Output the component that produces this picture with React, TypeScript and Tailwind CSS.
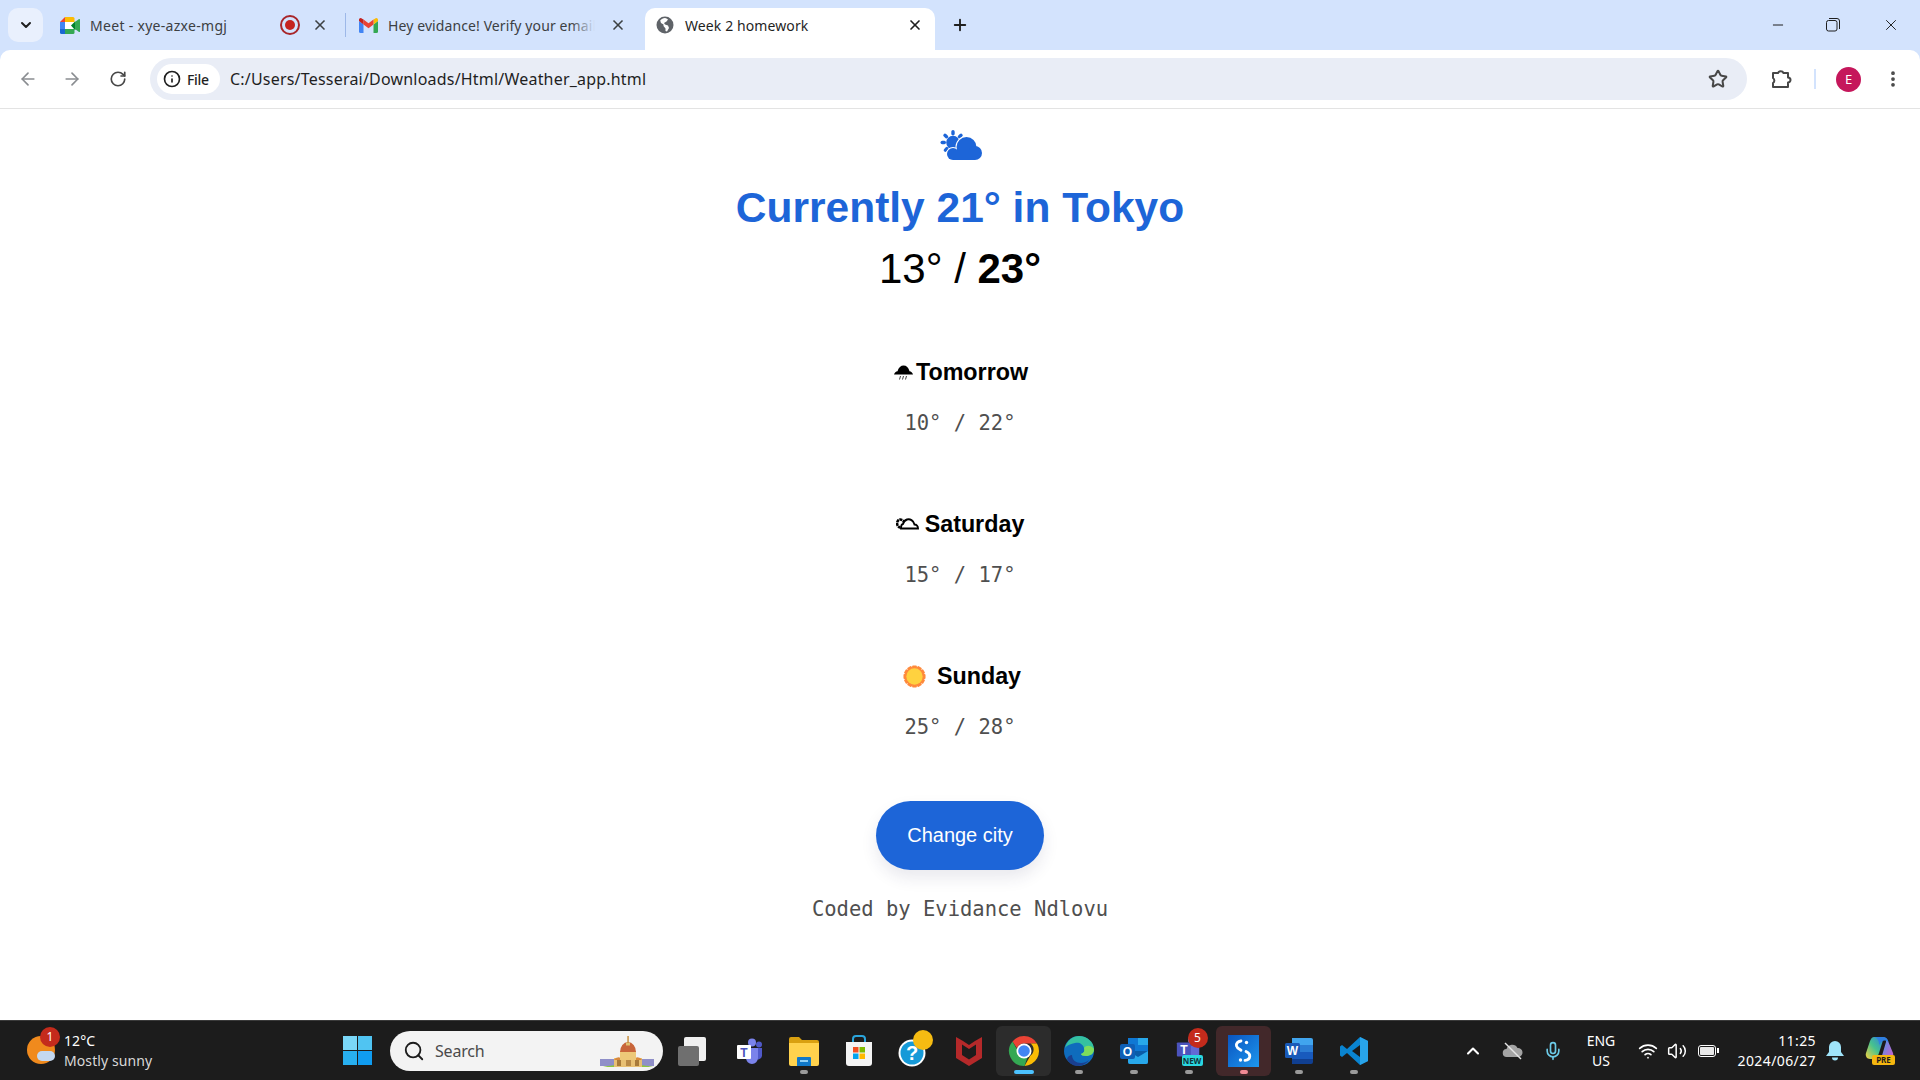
import React from "react";
import {
  ArrowLeft,
  ArrowRight,
  ChevronDown,
  ChevronUp,
  EllipsisVertical,
  Info,
  Mic,
  Minus,
  Plus,
  RotateCw,
  Search,
  Star,
  Volume2,
  Wifi,
  X,
} from "lucide-react";

function MeetIcon() {
  return (
    <svg width="20" height="17" viewBox="0 0 20 17">
      <path d="M0 5 5 0v5z" fill="#ea4335" />
      <path d="M0 5h5v7H0z" fill="#4285f4" />
      <path d="M0 12h5v5H1.500A1.500 1.500 0 0 1 0 15.500z" fill="#1967d2" />
      <path d="M5 0h8a1.500 1.500 0 0 1 1.500 1.500V5H5z" fill="#fbbc04" />
      <path d="M5 12h9.500v3.500A1.500 1.500 0 0 1 13 17H5z" fill="#34a853" />
      <path d="M5 5h9.500v7H5z" fill="#fff" />
      <path d="m11 8.500 3.500-3.500 1-.5V13l-1-.5z" fill="#00832d" />
      <path d="m15 5 4-3c.5-.3 1 0 1 .6v11.800c0 .6-.5.9-1 .6l-4-3z" fill="#34a853" />
    </svg>
  );
}

function GmailIcon() {
  return (
    <svg width="19" height="15" viewBox="0 0 19 15">
      <path d="M0 3v10.500A1.500 1.500 0 0 0 1.500 15H4.500V6.500z" fill="#4285f4" />
      <path d="M19 3v10.500a1.500 1.500 0 0 1-1.500 1.500H14.500V6.500z" fill="#34a853" />
      <path d="M14.500 1.500V6.500L19 3V1.800C19 .5 17.500-.4 16.400.4z" fill="#fbbc04" />
      <path d="M4.500 6.500v-5l5 3.800 5-3.800v5l-5 3.800z" fill="#ea4335" />
      <path d="M0 1.800V3l4.500 3.500v-5L2.600.4C1.500-.4 0 .5 0 1.800z" fill="#c5221f" />
    </svg>
  );
}

function GlobeIcon() {
  return (
    <svg width="18" height="18" viewBox="0 0 18 18">
      <circle cx="9" cy="9" r="8.500" fill="#5f6368" />
      <path
        d="M9 2c-2 .3-3.500 1-4.800 2.500L5 7l2.500 1.500V10l2 2.500V15l1.500.5 2-3.500-1-2.500L9 8.500 8 7l2.500-1.500L12 3.500C11 2.600 10 2.200 9 2z"
        fill="#fff"
      />
    </svg>
  );
}

function ExtensionIcon() {
  return (
    <svg width="24" height="24" viewBox="0 0 24 24" fill="none" stroke="currentColor" strokeWidth="2" strokeLinejoin="round">
      <path d="M4 6h5a3 3 0 0 1 5.500 0H19v4.500a2.500 2.500 0 0 1 0 5V20H4v-4a3 3 0 0 0 0-5z" />
    </svg>
  );
}

function CurrentWeatherIcon() {
  return (
    <svg width="43" height="30" viewBox="0 0 43 30" fill="#1d65d8">
      <rect x="12.300" y="0" width="3.400" height="5.500" rx="1.700" />
      <rect x="12.300" y="0" width="3.400" height="5.500" rx="1.700" transform="rotate(-48 14 12.500)" />
      <rect x="12.300" y="0" width="3.400" height="5.500" rx="1.700" transform="rotate(48 14 12.500)" />
      <rect x="12.300" y="0" width="3.400" height="5.500" rx="1.700" transform="rotate(-90 14 12.500)" />
      <rect x="12.300" y="0" width="3.400" height="5.500" rx="1.700" transform="rotate(-135 14 12.500)" />
      <circle cx="14" cy="12.500" r="6.800" />
      <circle cx="14" cy="24" r="7" fill="#fff" />
      <circle cx="27.500" cy="17" r="11" fill="#fff" />
      <circle cx="27.500" cy="17" r="10" />
      <circle cx="14" cy="24" r="6" />
      <circle cx="36" cy="23" r="7" />
      <rect x="14" y="20" width="22" height="10" />
    </svg>
  );
}

function RainIcon() {
  return (
    <svg width="19" height="15" viewBox="0 0 19 15" className="ml-[2px] mr-[3px]">
      <path d="M0 9.500C.5 7.500 2 6.500 3.500 6.200 4.500 2.500 7 .5 9.500.5c3 0 5 2 6 5.700 1.500.3 3 1.300 3.500 3.300z" fill="#000" />
      <path d="M6.500 11 5.500 14.500M9.500 11l-1 3.500M12.500 11l-1 3.500" stroke="#444" strokeWidth="1" fill="none" />
    </svg>
  );
}

function CloudOutlineIcon() {
  return (
    <svg width="23" height="13" viewBox="0 0 23 13" fill="none" stroke="#000" className="mr-[6px] mb-[2px]">
      <path d="M9 5.500C6 2 3 1.500 1.500 4.500.2 7 2 10.500 4.500 10.500" strokeWidth="2.500" strokeDasharray="3 .6" />
      <path d="M5 11.500h17c0-2.500-1.500-4-3.500-4-1-4-4.500-6-7.500-5-2.500.8-3.500 2.500-4 4.500-1.500.2-2 2-2 4.500z" strokeWidth="1.900" fill="#fff" />
    </svg>
  );
}

function ChromeIcon() {
  return (
    <svg width="32" height="32" viewBox="0 0 32 32">
      <path d="M16 1a15 15 0 0 1 13 7.500H16a7.500 7.500 0 0 0-7 4.800L4.500 6.400A15 15 0 0 1 16 1z" fill="#ea4335" />
      <path d="M29 8.500A15 15 0 0 1 16.500 31l6-10.400a7.500 7.500 0 0 0 .1-12.100z" fill="#fbbc04" />
      <path d="M4.500 6.400 10 16a7.500 7.500 0 0 0 9.500 6.300L16.500 31A15 15 0 0 1 4.500 6.400z" fill="#34a853" />
      <circle cx="16" cy="16" r="7.500" fill="#fff" />
      <circle cx="16" cy="16" r="5.800" fill="#4285f4" />
    </svg>
  );
}

function EdgeIcon() {
  return (
    <svg width="32" height="32" viewBox="0 0 32 32">
      <circle cx="16" cy="16" r="15" fill="#0f6cbd" />
      <path d="M2 13C4 5 10 1 16 1c8 0 15 6 15 13 0 5-4 7-8 7-3 0-5-1-5-2 3-1 4-3 3-6-1-4-5-6-9-5-4 1-8 2-10 5z" fill="#35c1a0" />
      <path d="M31 14c0 5-4 7-8 7-3 0-5-1-5-2 3-1 4-3 3-6 2-3 7-3 10 1z" fill="#7ddc5c" />
      <path d="M9 20c0 5 4 8 9 8 3 0 6-1 8-3-3 5-9 6-12 6-4 0-8-3-10-7 1-3 3-4 5-4z" fill="#1a3f8f" />
    </svg>
  );
}

function OutlookIcon() {
  return (
    <svg width="30" height="30" viewBox="0 0 30 30">
      <rect x="9" y="2" width="20" height="13" fill="#0f78d4" />
      <rect x="19" y="2" width="10" height="7" fill="#28a8ea" />
      <path d="M9 15h20v11a2 2 0 0 1-2 2H11a2 2 0 0 1-2-2z" fill="#0a5ca8" />
      <path d="m9 15 10 6 10-6v11a2 2 0 0 1-2 2H11a2 2 0 0 1-2-2z" fill="#28a8ea" />
      <rect x="1" y="8" width="15" height="15" rx="2" fill="#0f5fb5" />
      <text x="8.500" y="20" textAnchor="middle" fontSize="12" fontWeight="700" fill="#fff" fontFamily="'Liberation Sans', sans-serif">
        O
      </text>
    </svg>
  );
}

function TeamsIcon() {
  return (
    <svg width="30" height="30" viewBox="0 0 30 30">
      <circle cx="18" cy="6.500" r="4" fill="#7b83eb" />
      <circle cx="25" cy="8.500" r="3" fill="#5059c9" />
      <path d="M21 12h7v8a4 4 0 0 1-7 2z" fill="#5059c9" />
      <path d="M11 12h13v10a6 6 0 0 1-12 0z" fill="#7b83eb" />
      <rect x="3" y="9" width="14" height="14" fill="#fff" rx="1" />
      <text x="10" y="20.500" textAnchor="middle" fontSize="12" fontWeight="700" fill="#4b53bc" fontFamily="'Liberation Sans', sans-serif">
        T
      </text>
    </svg>
  );
}

function TeamsNewIcon() {
  return (
    <div className="relative w-[30px] h-[36px] flex items-start justify-center">
      <svg width="28" height="30" viewBox="0 0 30 30">
        <circle cx="18" cy="6.500" r="4" fill="#7b83eb" />
        <path d="M11 12h15v10a6 6 0 0 1-14 0z" fill="#6269d6" />
        <rect x="2" y="9" width="15" height="15" fill="#4b53bc" rx="1" />
        <text x="9.500" y="21" textAnchor="middle" fontSize="13" fontWeight="700" fill="#fff" fontFamily="'Liberation Sans', sans-serif">
          T
        </text>
      </svg>
      <div className="absolute left-[8px] top-[22px] w-[21px] h-[11px] rounded-[2px] bg-[#2ad7e0] text-[8px] leading-[11px] font-bold text-center text-[#10343a]">
        NEW
      </div>
      <div className="absolute left-[14px] top-[-5px] w-[20px] h-[20px] rounded-full bg-[#c42b1c] text-white text-[12px] leading-[20px] text-center">
        5
      </div>
    </div>
  );
}

function WordIcon() {
  return (
    <svg width="30" height="30" viewBox="0 0 30 30">
      <path d="M8 2h19a2 2 0 0 1 2 2v5H8z" fill="#41a5ee" />
      <rect x="8" y="9" width="21" height="7" fill="#2b7cd3" />
      <rect x="8" y="16" width="21" height="7" fill="#185abd" />
      <path d="M8 23h21v3a2 2 0 0 1-2 2H8z" fill="#103f91" />
      <rect x="1" y="7" width="15" height="15" rx="1.500" fill="#1a5ab8" />
      <text x="8.500" y="19" textAnchor="middle" fontSize="12" fontWeight="700" fill="#fff" fontFamily="'Liberation Sans', sans-serif">
        W
      </text>
    </svg>
  );
}

function VsCodeIcon() {
  return (
    <svg width="30" height="30" viewBox="0 0 30 30">
      <path d="M21 1 29 5v20l-8 4L8 17l-5 4-2-1.500V10.500L3 9l5 4z" fill="#0a84d0" />
      <path d="M21 1 29 5v20l-8 4z" fill="#28a4ea" />
      <path d="M21 9v12l-8-6z" fill="#1a1a1a" />
    </svg>
  );
}

function StoreIcon() {
  return (
    <svg width="30" height="32" viewBox="0 0 30 32">
      <path d="M9 8V4a3 3 0 0 1 3-3h6a3 3 0 0 1 3 3v4" fill="none" stroke="#2aa5dc" strokeWidth="2" />
      <path d="M2 7h26v21a3 3 0 0 1-3 3H5a3 3 0 0 1-3-3z" fill="#f4f4f4" />
      <rect x="9" y="12" width="5.500" height="5.500" fill="#f25022" />
      <rect x="15.500" y="12" width="5.500" height="5.500" fill="#7fba00" />
      <rect x="9" y="18.500" width="5.500" height="5.500" fill="#00a4ef" />
      <rect x="15.500" y="18.500" width="5.500" height="5.500" fill="#ffb900" />
    </svg>
  );
}

function FilesIcon() {
  return (
    <svg width="32" height="30" viewBox="0 0 32 30">
      <path d="M1 3a2 2 0 0 1 2-2h8l3 3h15a2 2 0 0 1 2 2v4H1z" fill="#d9a010" />
      <path d="M1 7h30v21a2 2 0 0 1-2 2H3a2 2 0 0 1-2-2z" fill="#ffd24d" />
      <path d="M10 21h12a1 1 0 0 1 1 1v8H9v-8a1 1 0 0 1 1-1z" fill="#1078c8" />
      <rect x="12" y="24" width="8" height="2" fill="#8fd0f5" />
    </svg>
  );
}

function HelpIcon() {
  return (
    <div className="relative w-[32px] h-[32px]">
      <svg width="30" height="32" viewBox="0 0 30 32">
        <circle cx="14" cy="18" r="13.500" fill="#fff" />
        <circle cx="14" cy="18" r="11.500" fill="#169ad8" />
        <text x="14" y="25" textAnchor="middle" fontSize="20" fontWeight="700" fill="#fff" fontFamily="'Liberation Sans', sans-serif">
          ?
        </text>
      </svg>
      <div className="absolute left-[15px] top-[-5px] w-[20px] h-[20px] rounded-full bg-[#f5bb12]" />
    </div>
  );
}

function McAfeeIcon() {
  return (
    <svg width="28" height="32" viewBox="0 0 28 32">
      <path d="M1 2 8 6l6 4 6-4 7-4v21L14 31 1 23z" fill="#b5292a" />
      <path d="M7 9.500 14 14l7-4.500v10.500L14 24.500 7 20z" fill="#1c1c1c" />
    </svg>
  );
}

function SnagIcon() {
  return (
    <svg width="31" height="32" viewBox="0 0 31 32">
      <defs>
        <linearGradient id="snag" x1="0" y1="0" x2="1" y2="1">
          <stop offset="0" stopColor="#0a54c0" />
          <stop offset="1" stopColor="#1d97ee" />
        </linearGradient>
      </defs>
      <rect width="31" height="32" fill="url(#snag)" />
      <path
        d="M13 6c-3.500.5-5 2.500-4.500 5 .4 2 2.500 3 4.500 4.200M18 16.500c2.500 1.200 4 2.500 3.800 4.800-.2 2-2 3.700-4.800 4"
        fill="none"
        stroke="#fff"
        strokeWidth="2.800"
        strokeLinecap="round"
      />
      <circle cx="18.500" cy="7.500" r="1.700" fill="#fff" />
      <circle cx="12.500" cy="25" r="1.700" fill="#fff" />
    </svg>
  );
}

function CopyIcon() {
  return (
    <div className="relative w-[32px] h-[32px]">
      <div className="absolute left-[6px] top-[2px] w-[22px] h-[24px] rounded-[2px] bg-[#f0f0f0]" />
      <div className="absolute left-0 top-[11px] w-[21px] h-[20px] rounded-[2px] bg-[#6f6f6f]" />
    </div>
  );
}

function CopilotIcon() {
  return (
    <div className="relative w-[30px] h-[30px]">
      <svg width="30" height="26" viewBox="0 0 30 26">
        <defs>
          <linearGradient id="cop1" x1="0" y1="1" x2="1" y2="0">
            <stop offset="0" stopColor="#f7d23e" />
            <stop offset="0.5" stopColor="#46c28e" />
            <stop offset="1" stopColor="#2f7fe0" />
          </linearGradient>
          <linearGradient id="cop2" x1="0" y1="0" x2="1" y2="1">
            <stop offset="0" stopColor="#3aa0ee" />
            <stop offset="1" stopColor="#d45cc8" />
          </linearGradient>
        </defs>
        <path d="M17 1c3 0 5 1 6 4l5 12c1 3-1 6-4 6h-8l5-17c.3-2-1-5-4-5z" fill="url(#cop2)" />
        <path d="M9 1h10l-5 16c-1 3-3 6-6 6H5c-3 0-5-3-4-6l4-12c1-2 2-4 4-4z" fill="url(#cop1)" />
        <path d="M9 1h9c3 0 5 2 5.500 5.500C21 3.500 17 4 15.500 7L14 9c.5-4-2-8-5-8z" fill="#2f7fe0" />
      </svg>
      <div className="absolute left-[7px] top-[19px] w-[23px] h-[10px] rounded-[2px] bg-[#f5b60f] text-[8px] leading-[10px] font-bold text-center text-[#1c1c1c]">
        PRE
      </div>
    </div>
  );
}

function SearchArt() {
  return (
    <svg width="55" height="33" viewBox="0 0 55 33" className="absolute left-[210px] top-[5px]">
      <rect x="0" y="23" width="14" height="7" fill="#8f8fc8" />
      <rect x="41" y="23" width="13" height="7" fill="#8f8fc8" />
      <path d="M3 31c10-3 40-3 50 0z" fill="#8cc63f" />
      <rect x="14" y="22" width="28" height="9" fill="#e8c074" />
      <rect x="17" y="24" width="4" height="6" fill="#a87a3a" />
      <rect x="26" y="22" width="5" height="8" fill="#b98a48" />
      <rect x="35" y="24" width="4" height="6" fill="#a87a3a" />
      <path d="M14 24a5 5 0 0 1 9 0z" fill="#d98a3c" />
      <path d="M33 24a5 5 0 0 1 9 0z" fill="#d98a3c" />
      <rect x="20" y="15" width="16" height="9" fill="#edc878" />
      <path d="M20 16a8 10 0 0 1 16 0z" fill="#c8653a" />
      <path d="M26 6.500h4v3h-4z" fill="#e0c070" />
      <rect x="27.300" y="0" width="1.500" height="7" fill="#c89040" />
    </svg>
  );
}

function TaskIcon({
  children,
  dot,
  active,
}: {
  children: React.ReactNode;
  dot?: string;
  active?: string;
}) {
  return (
    <div
      className={`relative w-[55px] h-[50px] rounded-[6px] flex items-center justify-center ${active ?? ""}`}
    >
      {children}
      {dot && <div className={`absolute bottom-[2px] h-[4px] rounded-full ${dot}`} />}
    </div>
  );
}

function SunIcon() {
  return (
    <svg width="23" height="23" viewBox="0 0 24 24">
      <g fill="#ff8a3c">
        {[0, 30, 60, 90, 120, 150, 180, 210, 240, 270, 300, 330].map((a) => (
          <rect key={a} x="9.500" y="0.500" width="5" height="5" rx="1" transform={`rotate(${a} 12 12)`} />
        ))}
      </g>
      <circle cx="12" cy="12" r="10" fill="#ff8a3c" />
      <circle cx="12" cy="12" r="8.500" fill="#ffd23f" />
    </svg>
  );
}

function DayForecast({
  icon,
  day,
  temps,
}: {
  icon: React.ReactNode;
  day: string;
  temps: string;
}) {
  return (
    <div className="flex flex-col items-center">
      <div className="h-[50px] flex items-center text-[23.300px] font-bold text-black">
        {icon}
        {day}
      </div>
      <div className="h-[53px] flex items-center text-[20.500px] text-[#4f4f4f] font-['DejaVu_Sans_Mono',monospace]">
        {temps}
      </div>
    </div>
  );
}

export default function App() {
  return (
    <div className="w-[1920px] h-[1080px] flex flex-col overflow-hidden bg-white font-['Liberation_Sans',Arial,sans-serif]">
      {/* browser chrome */}
      <div className="bg-[#d3e3fd] shrink-0 font-['Noto_Sans',sans-serif]">
        <div className="h-[50px] flex items-end text-[14px] tracking-[0.1px] text-[#3c4043]">
          <div className="self-start mt-[8px] ml-[8px] w-[35px] h-[34px] rounded-[10px] bg-[#e9f0fd] flex items-center justify-center">
            <ChevronDown size={16} strokeWidth={3} className="text-[#1f1f1f]" />
          </div>
          <div className="w-[295px] ml-[7px] h-[42px] flex items-center pl-[10px] pb-[8px]">
            <MeetIcon />
            <span className="ml-[10px] w-[190px] tracking-[0.3px]">Meet - xye-azxe-mgj</span>
            <div className="w-[20px] h-[20px] rounded-full border-2 border-[#a8262a] flex items-center justify-center mr-[12px]">
              <div className="w-[10px] h-[10px] rounded-full bg-[#c5221f]" />
            </div>
            <X size={16} strokeWidth={2.500} className="text-[#3c4043]" />
          </div>
          <div className="w-px h-[24px] mb-[13px] bg-[#9db8e8]" />
          <div className="w-[299px] h-[42px] flex items-center pl-[13px] pb-[8px]">
            <GmailIcon />
            <div className="relative ml-[10px] w-[207px] overflow-hidden whitespace-nowrap">
              Hey evidance! Verify your email
              <div className="absolute right-0 top-0 bottom-0 w-[24px] bg-gradient-to-r from-transparent to-[#d3e3fd]" />
            </div>
            <X size={16} strokeWidth={2.500} className="ml-[15px] text-[#3c4043]" />
          </div>
          <div className="w-[290px] h-[42px] bg-white rounded-t-[10px] flex items-center pl-[11px] pb-[8px] text-[#1f1f1f]">
            <GlobeIcon />
            <span className="ml-[11px] w-[222px]">Week 2 homework</span>
            <X size={16} strokeWidth={2.500} className="text-[#1f1f1f]" />
          </div>
          <div className="ml-[16px] h-[42px] flex items-center pb-[8px]">
            <Plus size={18} strokeWidth={2.500} className="text-[#1f1f1f]" />
          </div>
          <div className="flex-1" />
          <div className="self-start h-[50px] flex items-center text-[#1f1f1f]">
            <Minus size={16} strokeWidth={1.500} className="mr-[40px]" />
            <svg width="14" height="14" viewBox="0 0 14 14" className="mr-[42px]" fill="none" stroke="currentColor" strokeWidth="1">
              <rect x="0.500" y="2.500" width="10.500" height="10.500" rx="2" />
              <path d="M3 .5h8a2.500 2.500 0 0 1 2.500 2.500v8" />
            </svg>
            <X size={18} strokeWidth={1.300} className="mr-[20px]" />
          </div>
        </div>
        <div className="h-[59px] bg-white rounded-t-[10px] border-b border-[#e3e3e3] flex items-center text-[#5f6368]">
          <ArrowLeft size={20} strokeWidth={2} className="ml-[18px] text-[#8a8d91]" />
          <ArrowRight size={20} strokeWidth={2} className="ml-[24px] text-[#8a8d91]" />
          <RotateCw size={18} strokeWidth={2.200} className="ml-[27px] text-[#474747]" />
          <div className="ml-[23px] w-[1597px] h-[42px] rounded-full bg-[#e9edf6] flex items-center pl-[7px]">
            <div className="w-[63px] h-[30px] rounded-full bg-white flex items-center pl-[6px] text-[#1f1f1f]">
              <Info size={18} strokeWidth={2.200} />
              <span className="ml-[6px] text-[14px] font-medium tracking-[-0.3px]">File</span>
            </div>
            <span className="ml-[10px] text-[16px] text-[#1f1f1f] tracking-[0.2px]">
              C:/Users/Tesserai/Downloads/Html/Weather_app.html
            </span>
            <div className="flex-1" />
            <Star size={20} strokeWidth={2.400} className="mr-[19px] text-[#474747]" />
          </div>
          <div className="ml-[22px] text-[#474747] flex">
            <ExtensionIcon />
          </div>
          <div className="ml-[21px] w-[2px] h-[20px] bg-[#d3e3fd]" />
          <div className="ml-[20px] w-[25px] h-[25px] rounded-full bg-[#c5175b] text-white text-[13px] leading-[25px] text-center">
            E
          </div>
          <EllipsisVertical size={20} strokeWidth={2.500} className="ml-[22px] text-[#474747]" />
        </div>
      </div>

      {/* page */}
      <main className="flex-1 flex flex-col items-center pt-[21px]">
        <CurrentWeatherIcon />
        <h1 className="mt-[23px] h-[50px] flex items-center text-[42.500px] font-bold text-[#1d65d8]">
          Currently 21° in Tokyo
        </h1>
        <div className="mt-[10px] h-[50px] flex items-center text-[42px] text-black">
          13° /&nbsp;<strong>23°</strong>
        </div>
        <div className="mt-[54px] flex flex-col gap-[49px]">
          <DayForecast icon={<RainIcon />} day="Tomorrow" temps="10° / 22°" />
          <DayForecast icon={<CloudOutlineIcon />} day="Saturday" temps="15° / 17°" />
          <DayForecast icon={<div className="ml-[4px] mr-[11px] flex"><SunIcon /></div>} day="Sunday" temps="25° / 28°" />
        </div>
        <button className="mt-[47px] w-[168px] h-[69px] pb-[2px] rounded-full bg-[#1d65d8] text-white text-[20px] shadow-[0_8px_16px_rgba(40,40,90,0.1)]">
          Change city
        </button>
        <div className="mt-[24px] h-[30px] flex items-center text-[20.500px] text-[#4f4f4f] font-['DejaVu_Sans_Mono',monospace]">
          Coded by Evidance Ndlovu
        </div>
      </main>

      {/* taskbar */}
      <footer className="h-[60px] shrink-0 bg-[#1c1c1c] border-t border-[#3a3a3a] flex items-center text-white font-['Noto_Sans',sans-serif]">
        <div className="relative w-[30px] h-[30px] ml-[27px] mt-[-2px]">
          <div className="absolute left-0 top-[1px] w-[28px] h-[28px] rounded-full bg-[#f08a1d]" />
          <div className="absolute left-[10px] top-[16px] w-[18px] h-[10px] rounded-full bg-[#c4d8f0]" />
          <div className="absolute left-[13px] top-[-8px] w-[20px] h-[20px] rounded-full bg-[#c42b1c] text-[12px] leading-[20px] text-center">
            1
          </div>
        </div>
        <div className="ml-[7px] w-[279px] text-[14px] leading-[20px] tracking-[0.1px]">
          <div>12°C</div>
          <div className="text-[#d8d8d8]">Mostly sunny</div>
        </div>
        <div className="grid grid-cols-2 gap-[1px] w-[29px] h-[29px]">
          <div className="bg-[#7ad7f7]" />
          <div className="bg-[#50c4f2]" />
          <div className="bg-[#28b0f0]" />
          <div className="bg-[#109cf0]" />
        </div>
        <div className="relative ml-[18px] w-[273px] h-[40px] rounded-full bg-[#f3f3f3] flex items-center pl-[13px] text-[#4a4a4a] text-[16px] tracking-[-0.2px]">
          <Search size={22} strokeWidth={2} className="text-[#1c1c1c]" />
          <span className="ml-[10px]">Search</span>
          <SearchArt />
        </div>
        <div className="ml-[3px] flex items-center">
          <TaskIcon><CopyIcon /></TaskIcon>
          <TaskIcon><TeamsIcon /></TaskIcon>
          <TaskIcon dot="w-[8px] bg-[#9a9a9a]"><FilesIcon /></TaskIcon>
          <TaskIcon><StoreIcon /></TaskIcon>
          <TaskIcon><HelpIcon /></TaskIcon>
          <TaskIcon><McAfeeIcon /></TaskIcon>
          <TaskIcon dot="w-[20px] bg-[#4cc2ff]" active="bg-[#2c2c2c]"><ChromeIcon /></TaskIcon>
          <TaskIcon dot="w-[8px] bg-[#9a9a9a]"><EdgeIcon /></TaskIcon>
          <TaskIcon dot="w-[8px] bg-[#9a9a9a]"><OutlookIcon /></TaskIcon>
          <TaskIcon dot="w-[8px] bg-[#9a9a9a]"><TeamsNewIcon /></TaskIcon>
          <TaskIcon dot="w-[8px] bg-[#f08a94]" active="bg-[#42282a]"><SnagIcon /></TaskIcon>
          <TaskIcon dot="w-[8px] bg-[#9a9a9a]"><WordIcon /></TaskIcon>
          <TaskIcon dot="w-[8px] bg-[#9a9a9a]"><VsCodeIcon /></TaskIcon>
        </div>
        <div className="flex-1" />
        <div className="flex items-center text-[14px] leading-[20px]">
          <div className="w-[40px] flex justify-center"><ChevronUp size={20} strokeWidth={2.500} /></div>
          <div className="w-[40px] flex justify-center">
            <svg width="22" height="18" viewBox="0 0 22 18">
              <path d="M5 15a4 4 0 0 1-.5-8 6 6 0 0 1 11-1 4.500 4.500 0 0 1 1 9z" fill="#a4a4a4" />
              <path d="M3 1l16 16" stroke="#e6e6e6" strokeWidth="1.500" />
            </svg>
          </div>
          <div className="w-[40px] flex justify-center"><Mic size={20} strokeWidth={2} className="text-[#6ccbe8]" /></div>
          <div className="w-[56px] text-center">
            <div>ENG</div>
            <div>US</div>
          </div>
          <div className="w-[38px] flex justify-center"><Wifi size={20} strokeWidth={2} /></div>
          <div className="w-[20px] flex justify-center"><Volume2 size={20} strokeWidth={1.800} /></div>
          <div className="w-[40px] flex justify-center">
            <div className="relative w-[18px] h-[12px] rounded-[3px] border-[1.500px] border-white p-[1px]">
              <div className="w-full h-full rounded-[1px] bg-[#e8e8e8]" />
              <div className="absolute right-[-4px] top-[2px] w-[2px] h-[5px] bg-white" />
            </div>
          </div>
          <div className="w-[89px] text-right whitespace-nowrap tracking-[0.4px]">
            <div>11:25</div>
            <div>2024/06/27</div>
          </div>
          <div className="w-[38px] flex justify-center">
            <svg width="18" height="20" viewBox="0 0 18 20">
              <path d="M9 0a6 6 0 0 1 6 6v5l3 4H0l3-4V6a6 6 0 0 1 6-6z" fill="#9fe4fa" />
              <path d="M6 16.500h6a3 3 0 0 1-6 0z" fill="#9fe4fa" />
            </svg>
          </div>
          <div className="w-[52px] flex justify-center"><CopilotIcon /></div>
          <div className="w-[14px]" />
        </div>
      </footer>
    </div>
  );
}
